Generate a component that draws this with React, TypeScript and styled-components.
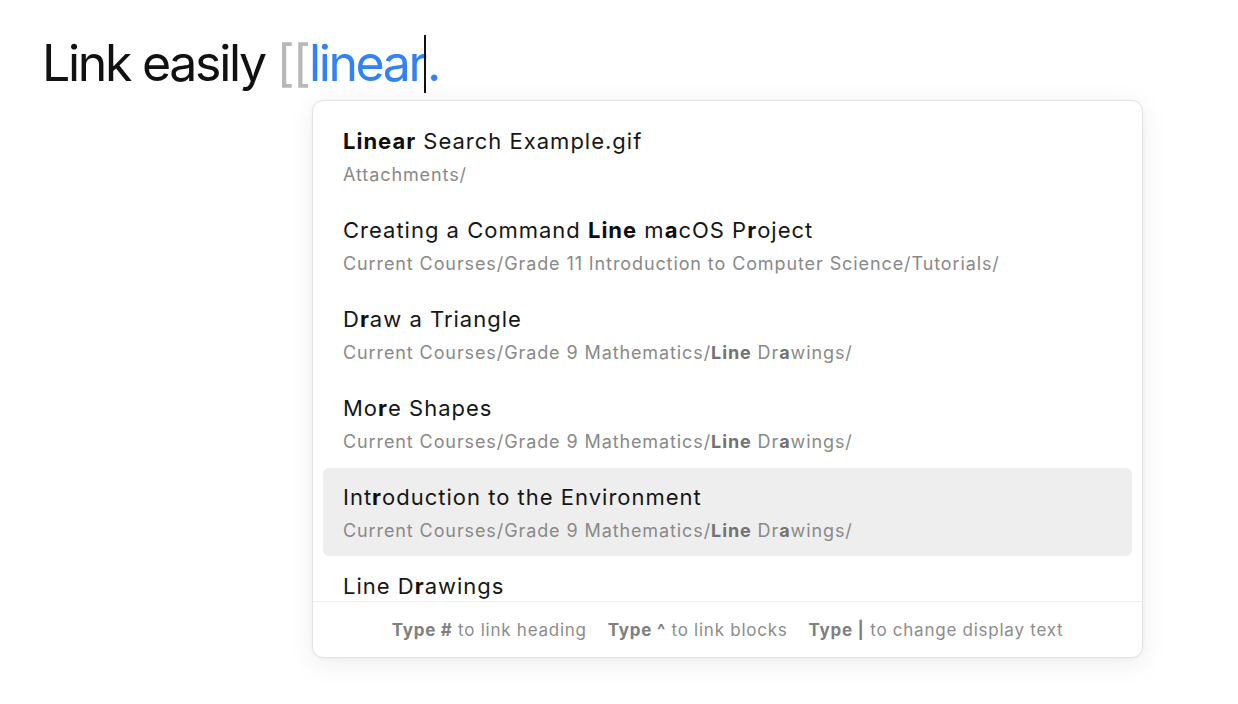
import React from "react";
import styled, { createGlobalStyle } from "styled-components";

const GlobalStyle = createGlobalStyle`
  html, body {
    margin: 0;
    padding: 0;
    background: #ffffff;
  }
  body {
    font-family: Inter, "Noto Sans", "Liberation Sans", sans-serif;
    -webkit-font-smoothing: antialiased;
  }
`;

interface Segment {
  text: string;
  match?: boolean;
}

interface Suggestion {
  title: Segment[];
  path?: Segment[];
  active?: boolean;
}

const mathPath: Segment[] = [
  { text: "Current Courses/Grade 9 Mathematics/" },
  { text: "Line", match: true },
  { text: " Dr" },
  { text: "a", match: true },
  { text: "wings/" },
];

const suggestions: Suggestion[] = [
  {
    title: [{ text: "Linear", match: true }, { text: " Search Example.gif" }],
    path: [{ text: "Attachments/" }],
  },
  {
    title: [
      { text: "Creating a Command " },
      { text: "Line", match: true },
      { text: " m" },
      { text: "a", match: true },
      { text: "cOS P" },
      { text: "r", match: true },
      { text: "oject" },
    ],
    path: [
      {
        text: "Current Courses/Grade 11 Introduction to Computer Science/Tutorials/",
      },
    ],
  },
  {
    title: [{ text: "D" }, { text: "r", match: true }, { text: "aw a Triangle" }],
    path: mathPath,
  },
  {
    title: [{ text: "Mo" }, { text: "r", match: true }, { text: "e Shapes" }],
    path: mathPath,
  },
  {
    title: [
      { text: "Int" },
      { text: "r", match: true },
      { text: "oduction to the Environment" },
    ],
    path: mathPath,
    active: true,
  },
  {
    title: [{ text: "Line D" }, { text: "r", match: true }, { text: "awings" }],
    path: [{ text: "Current Courses/Grade 9 Mathematics/" }],
  },
];

const hints = [
  { key: "Type #", label: "to link heading" },
  { key: "Type ^", label: "to link blocks" },
  { key: "Type |", label: "to change display text" },
];

const Editor = styled.div`
  position: relative;
  width: 1238px;
  height: 704px;
  overflow: hidden;
`;

const Heading = styled.h1`
  margin: 0;
  padding: 33px 0 0 42px;
  font-size: 50px;
  font-weight: 400;
  line-height: 60px;
  letter-spacing: -2.3px;
  color: #111111;
  white-space: nowrap;
`;

const Brackets = styled.span`
  color: #b8b8b8;
  letter-spacing: -2px;
`;

const LinkText = styled.span`
  color: #3182f6;
  letter-spacing: -2.4px;
`;

const Caret = styled.span`
  display: inline-block;
  width: 2px;
  height: 58px;
  margin: 0 1px 0 -1px;
  background: #111111;
  vertical-align: -12px;
`;

const Popover = styled.div`
  position: absolute;
  left: 312px;
  top: 100px;
  width: 831px;
  height: 558px;
  box-sizing: border-box;
  display: flex;
  flex-direction: column;
  background: #ffffff;
  border: 1px solid #e3e3e3;
  border-radius: 11px;
  box-shadow: 0 6px 28px rgba(0, 0, 0, 0.07), 0 1px 4px rgba(0, 0, 0, 0.04);
  overflow: hidden;
`;

const List = styled.div`
  flex: 1;
  overflow: hidden;
  padding: 11px 10px 0 10px;
  display: flex;
  flex-direction: column;
  gap: 1px;
`;

const Item = styled.div<{ $active?: boolean }>`
  flex-shrink: 0;
  height: 88px;
  box-sizing: border-box;
  padding: 14px 20px 0 20px;
  border-radius: 6px;
  background: ${(p) => (p.$active ? "#eeeeee" : "transparent")};
`;

const Title = styled.div`
  font-size: 22px;
  line-height: 30px;
  letter-spacing: 1px;
  color: #161616;
  white-space: nowrap;
`;

const Path = styled.div`
  margin-top: 7px;
  font-size: 18px;
  line-height: 24px;
  letter-spacing: 0.9px;
  color: #898989;
  white-space: nowrap;
`;

const Match = styled.b<{ $muted?: boolean }>`
  font-weight: 700;
  color: ${(p) => (p.$muted ? "#737373" : "#0e0e0e")};
`;

const Footer = styled.div`
  flex-shrink: 0;
  height: 55px;
  border-top: 1px solid #efefef;
  display: flex;
  align-items: center;
  justify-content: center;
  gap: 21px;
  font-size: 17px;
  letter-spacing: 0.75px;
  color: #8c8c8c;
`;

const Hint = styled.span`
  white-space: nowrap;
`;

const HintKey = styled.b`
  font-weight: 700;
  color: #808080;
`;

function renderSegments(segments: Segment[], muted?: boolean) {
  return segments.map((s, i) =>
    s.match ? (
      <Match key={i} $muted={muted}>
        {s.text}
      </Match>
    ) : (
      <React.Fragment key={i}>{s.text}</React.Fragment>
    )
  );
}

export default function App() {
  return (
    <>
      <GlobalStyle />
      <Editor>
        <Heading>
          Link easily <Brackets>[[</Brackets>
          <LinkText>
            linear
            <Caret />.
          </LinkText>
        </Heading>
        <Popover>
          <List>
            {suggestions.map((s, i) => (
              <Item key={i} $active={s.active}>
                <Title>{renderSegments(s.title)}</Title>
                {s.path && <Path>{renderSegments(s.path, true)}</Path>}
              </Item>
            ))}
          </List>
          <Footer>
            {hints.map((h) => (
              <Hint key={h.key}>
                <HintKey>{h.key}</HintKey> {h.label}
              </Hint>
            ))}
          </Footer>
        </Popover>
      </Editor>
    </>
  );
}
